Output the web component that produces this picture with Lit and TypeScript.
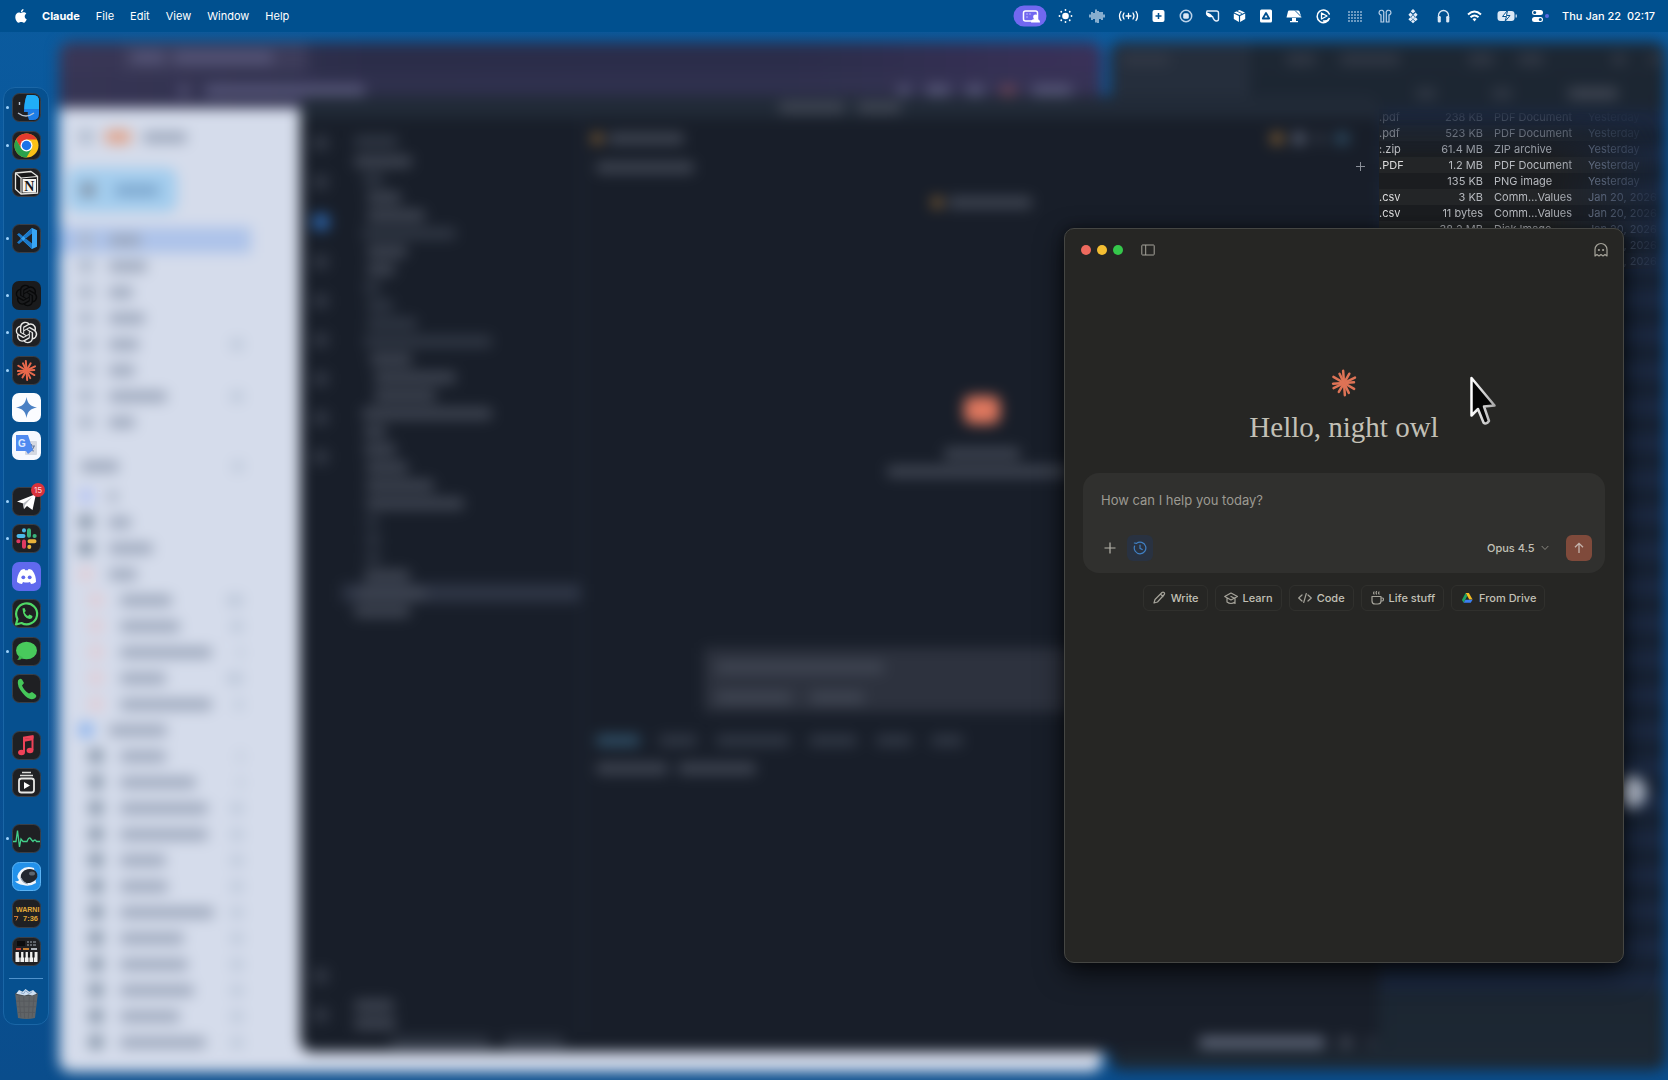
import { LitElement, html, css, svg } from "lit";
import { customElement, property, state } from "lit/decorators.js";
import { classMap } from "lit/directives/class-map.js";

type Bar = { w: number; tone?: string };

const bar = (w: number, tone = "") =>
  html`<span class="bar ${tone}" style="width:${w}px"></span>`;

const bars = (items: Bar[]) => items.map((b) => bar(b.w, b.tone));

/* ---------- menu bar ---------- */

const menus = ["File", "Edit", "View", "Window", "Help"];

const ticks = [0, 45, 90, 135, 180, 225, 270, 315];

const extras = [
  {
    label: "Screen sharing",
    w: 39,
    art: svg`<rect x="-17" y="-10.500" width="33" height="21" rx="10.500" fill="#7168f0"/>
      <rect x="-7" y="-5" width="14" height="10" rx="2" fill="none" stroke="#fff" stroke-width="1.5"/>
      <circle cx="5" cy="1" r="2.4" fill="#fff"/><path d="M0.5 6.5c0-3 2-3.500 4.500-3.500s4.500.5 4.500 3.500z" fill="#fff"/>
      <path d="M-4-2h1M-1-2h1M-4 1h1" stroke="#fff"/>`,
  },
  {
    label: "Brightness",
    w: 31,
    art: svg`<circle r="3.300" fill="#fff"/>${ticks.map(
      (a) => svg`<circle cx="0" cy="-6" r="0.9" fill="#fff" transform="rotate(${a})"/>`
    )}`,
  },
  {
    label: "Voice",
    w: 32,
    art: svg`<path d="M-7-1.500v3M-5-4v8M-3-3v6M-1-6.500v13M1-5v12M3-4v7M5-4v8M7-1.500v3" stroke="#cfe0f2" stroke-width="1.300"/>`,
  },
  {
    label: "Broadcast",
    w: 31,
    art: svg`<path d="M0-2.500v5M-2.500 0h5M-4.500-3q-2 3 0 6M4.500-3q2 3 0 6M-7.500-4.500q-3 4.500 0 9M7.500-4.500q3 4.500 0 9" fill="none" stroke="#fff" stroke-width="1.300" stroke-linecap="round"/>`,
  },
  {
    label: "Add",
    w: 29,
    art: svg`<rect x="-6" y="-6" width="12" height="12" rx="2" fill="#fff"/><path d="M0-3v6M-3 0h6" stroke="#00508f" stroke-width="1.500"/>`,
  },
  {
    label: "Record",
    w: 26,
    art: svg`<circle r="5.700" fill="none" stroke="#bcd3ea" stroke-width="1.500"/><rect x="-2.800" y="-2.800" width="5.600" height="5.600" rx="1.500" fill="#dbe8f5"/>`,
  },
  {
    label: "Tag",
    w: 27,
    art: svg`<path d="M-5.500-5h9.500q2 0 2 2v6q0 2-2 2-2.500 0-4-4.500h-3q-4-1.500-2.500-5.500z" fill="none" stroke="#e4eefa" stroke-width="1.400" stroke-linejoin="round"/><path d="M-6-3.500q5 .5 6 4.500h-3q-3.500-1-3-4.500z" fill="#fff"/>`,
  },
  {
    label: "Package",
    w: 27,
    art: svg`<path d="M0-6l5.500 2.500L0-1-5.500-3.500zM-5.700-2.500L-.6 0v6l-5.100-3zM5.700-2.500L.6 0v6l5.100-3z" fill="#fff"/><path d="M-3-5l5.500 2.600" stroke="#00508f" stroke-width=".8"/>`,
  },
  {
    label: "Drive",
    w: 26,
    art: svg`<rect x="-6" y="-6.500" width="12" height="13" rx="1.500" fill="#fff"/><path d="M0-3l3.200 5.500h-6.400z" fill="none" stroke="#00508f" stroke-width="1.800" stroke-linejoin="round"/>`,
  },
  {
    label: "Display",
    w: 30,
    art: svg`<path d="M-5-5.500H4q1 0 1.500 1L7.500 1.500h-15L-6-4.500q.3-1 1-1z" fill="#fff"/><path d="M-2 2h4v3h-4zM-4 5h8v1.300h-8z" fill="#fff"/><path d="M1-5.500l6 6" stroke="#00508f" stroke-width=".9"/>`,
  },
  {
    label: "Grammar",
    w: 29,
    art: svg`<path d="M5.800-2A6.300 6.300 0 1 0 6 2Q4 5.500 0 5" fill="none" stroke="#fff" stroke-width="1.500" stroke-linecap="round"/><path d="M-2-3L3.500 0-2 3z" fill="none" stroke="#fff" stroke-width="1.300" stroke-linejoin="round"/>`,
  },
  {
    label: "Grid",
    w: 34,
    art: svg`${[-4, -1, 2, 5].map((y) =>
      [-6, -3, 0, 3, 6].map((x) => svg`<rect x=${x - 0.7} y=${y - 0.7} width="1.400" height="1.400" fill="#dbe8f5"/>`)
    )}`,
  },
  {
    label: "Earbuds",
    w: 26,
    art: svg`<path d="M-1.300 6V-2.500a2.400 2.400 0 1 0-2.700 1.500V6zM1.300 6V-2.500a2.400 2.400 0 1 1 2.700 1.500V6z" fill="none" stroke="#b9d0e8" stroke-width="1.200"/>`,
  },
  {
    label: "Sync",
    w: 30,
    art: svg`<path d="M0-7l2.300 2.300L0-2.400l-2.300-2.300zM-2.600-3.600l2.300 2.300-2.300 2.300-2-2.300zM2.600-3.600l2 2.300-2 2.300L.3-1.300zM-2.600 1.200l2.300 2.100-2.300 2-2-2zM2.600 1.200l2 2.100-2 2-2.300-2zM0-.8l2 2L0 3.200l-2-2zM0 3.800l2 1.700L0 7.200l-2-1.700z" fill="#e4eefa"/>`,
  },
  {
    label: "Headphones",
    w: 31,
    art: svg`<path d="M-5 4.500V-.5a5 5 0 0 1 10 0v5" fill="none" stroke="#dbe8f5" stroke-width="1.300"/><rect x="-5.700" y="0" width="3" height="6.500" rx="1.300" fill="#dbe8f5"/><rect x="2.700" y="0" width="3" height="6.500" rx="1.300" fill="#dbe8f5"/>`,
  },
  {
    label: "Wi-Fi",
    w: 31,
    art: svg`<path d="M-6.500-1.500q6.500-6 13 0M-4 1.300q4-3.800 8 0" fill="none" stroke="#fff" stroke-width="1.900"/><path d="M0 5.500L-2 3q2-1.600 4 0z" fill="#fff"/>`,
  },
  {
    label: "Battery",
    w: 33,
    art: svg`<rect x="-9" y="-5" width="17" height="10" rx="3" fill="#dbe8f5"/><rect x="9" y="-1.500" width="1.500" height="3" fill="#a9c4e0"/><path d="M1-5.500l-5 6h4l-1.500 5 5-6H0z" fill="#fff" stroke="#00508f" stroke-width="1"/>`,
  },
  {
    label: "Control Center",
    w: 32,
    art: svg`<rect x="-7" y="-6" width="11" height="5" rx="2.500" fill="#fff"/><circle cx="-4.300" cy="-3.500" r="1.500" fill="#00508f"/><rect x="-7" y="1" width="11" height="5" rx="2.500" fill="#fff"/><circle cx="1.300" cy="3.500" r="1.500" fill="#00508f"/><circle cx="8" cy="0" r="2" fill="#5a6be0"/>`,
  },
];

@customElement("menu-bar")
export class MenuBar extends LitElement {
  static styles = css`
    :host {
      display: flex;
      align-items: center;
      height: 32px;
      padding: 0 13px 0 11px;
      box-sizing: border-box;
      background: #00508f;
      color: #fff;
      font: 11px Inter, "Liberation Sans", sans-serif;
    }
    button {
      display: flex;
      align-items: center;
      border: 0;
      padding: 0;
      background: none;
      color: inherit;
      font: inherit;
    }
    .apple {
      padding: 0 4px;
      margin-right: 11px;
    }
    nav {
      display: flex;
      gap: 16px;
      flex: 1;
    }
    .app {
      font-weight: 700;
    }
    .clock {
      font-weight: 500;
      margin-left: 7px;
      white-space: pre;
    }
  `;

  render() {
    return html`
      <button class="apple" aria-label="Apple menu">
        <svg width="12" height="14" viewBox="0 0 12 14">
          <path
            fill="#fff"
            d="M8.500 0C8.600 1.800 7.300 3.100 5.900 3.200 5.700 1.600 7.100.2 8.500 0zM6 4c.6 0 1.400-.7 2.700-.7 1 0 2 .5 2.600 1.400-2.300 1.400-1.900 4.500.4 5.500-.6 1.600-1.600 3.500-2.900 3.500-1 0-1.300-.6-2.600-.6-1.200 0-1.600.6-2.600.6C2 13.700.3 10.700.3 8c0-3 1.900-4.600 3.600-4.600C4.900 3.400 5.600 4 6 4z"
          />
        </svg>
      </button>
      <nav>
        <button class="app">Claude</button>
        ${menus.map((m) => html`<button>${m}</button>`)}
      </nav>
      ${extras.map(
        (e) => html`
          <button aria-label=${e.label}>
            <svg width=${e.w} height="22" viewBox="${-e.w / 2} -11 ${e.w} 22">${e.art}</svg>
          </button>
        `
      )}
      <time class="clock">Thu Jan 22  02:17</time>
    `;
  }
}

/* ---------- dock ---------- */

const rays = (color: string, r: number, width: number) => {
  const lengths = [1, 0.88, 1, 0.82, 0.96, 0.9, 1, 0.85, 0.95, 0.9, 1, 0.84];
  return svg`<g stroke=${color} stroke-width=${width} stroke-linecap="round">${lengths.map(
    (l, i) => svg`<path d="M0 0V${-r * l}" transform="rotate(${i * 30 + (i % 3) * 4 - 4})"/>`
  )}</g>`;
};

const knot = (color: string) =>
  svg`<path transform="translate(3.700 3.700) scale(.9)" fill=${color} d="M22.2819 9.8211a5.9847 5.9847 0 0 0-.5157-4.9108 6.0462 6.0462 0 0 0-6.5098-2.9A6.0651 6.0651 0 0 0 4.9807 4.1818a5.9847 5.9847 0 0 0-3.9977 2.9 6.0462 6.0462 0 0 0 .7427 7.0966 5.98 5.98 0 0 0 .511 4.9107 6.051 6.051 0 0 0 6.5146 2.9001A5.9847 5.9847 0 0 0 13.2599 24a6.0557 6.0557 0 0 0 5.7718-4.2058 5.9894 5.9894 0 0 0 3.9977-2.9001 6.0557 6.0557 0 0 0-.7475-7.0729zm-9.022 12.6081a4.4755 4.4755 0 0 1-2.8764-1.0408l.1419-.0804 4.7783-2.7582a.7948.7948 0 0 0 .3927-.6813v-6.7369l2.02 1.1686a.071.071 0 0 1 .038.052v5.5826a4.504 4.504 0 0 1-4.4945 4.4944zm-9.6607-4.1254a4.4708 4.4708 0 0 1-.5346-3.0137l.142.0852 4.783 2.7582a.7712.7712 0 0 0 .7806 0l5.8428-3.3685v2.3324a.0804.0804 0 0 1-.0332.0615L9.74 19.9502a4.4992 4.4992 0 0 1-6.1408-1.6464zM2.3408 7.8956a4.485 4.485 0 0 1 2.3655-1.9728V11.6a.7664.7664 0 0 0 .3879.6765l5.8144 3.3543-2.0201 1.1685a.0757.0757 0 0 1-.071 0l-4.8303-2.7865A4.504 4.504 0 0 1 2.3408 7.8956zm16.5963 3.8558L13.1038 8.364 15.1192 7.2a.0757.0757 0 0 1 .071 0l4.8303 2.7913a4.4944 4.4944 0 0 1-.6765 8.1042v-5.6772a.79.79 0 0 0-.407-.667zm2.0107-3.0231l-.142-.0852-4.7735-2.7818a.7759.7759 0 0 0-.7854 0L9.409 9.2297V6.8974a.0662.0662 0 0 1 .0284-.0615l4.8303-2.7866a4.4992 4.4992 0 0 1 6.6802 4.66zM8.3065 12.863l-2.02-1.1638a.0804.0804 0 0 1-.038-.0567V6.0742a4.4992 4.4992 0 0 1 7.3757-3.4537l-.142.0805L8.704 5.459a.7948.7948 0 0 0-.3927.6813zm1.0976-2.3654l2.602-1.4998 2.6069 1.4998v2.9994l-2.5974 1.4997-2.6067-1.4997Z"/>`;

const dark = svg`<rect x=".5" y=".5" width="28" height="28" rx="7" fill="#1f2023" stroke="#3a3f47"/>`;

const dockGroups = [
  [
    {
      label: "Finder",
      open: true,
      art: svg`${dark}<path d="M15 2h6q6 0 6 6v13q0 6-6 6h-4c-1-3-1.500-5-1.200-8H12c0-7 1-13 3-17z" fill="#1d7de6"/><path d="M15 2h6q6 0 6 6v8H12.300c.2-6 1.200-11 2.700-14z" fill="#20aef8"/><path d="M6 20q8 6 16 0" fill="none" stroke="#b9c4d2" stroke-width="1.300"/><path d="M7.500 9v3" stroke="#b9c4d2" stroke-width="1.400"/>`,
    },
    {
      label: "Chrome",
      open: true,
      art: svg`${dark}<circle cx="14.500" cy="14.500" r="12" fill="#fbc116"/><path d="M4.100 8.500a12 12 0 0 1 20.800 0H14.500L9.300 17.500z" fill="#e33b2e"/><path d="M4.100 8.500a12 12 0 0 0 10.400 18l5.200-9-10.400 0z" fill="#2ba24c"/><circle cx="14.500" cy="14.500" r="6" fill="#fff"/><circle cx="14.500" cy="14.500" r="4.700" fill="#1a73e8"/>`,
    },
    {
      label: "Notion",
      art: svg`${dark}<path d="M3.500 5L19 3.500l6.500 4.700V25l-16.500 1-5.500-5z" fill="#17181a" stroke="#e4e4e0" stroke-width="1.300" stroke-linejoin="round"/><path d="M4 5.500l5 4.500M9 10l16.500-1.500M9 10v16" stroke="#e4e4e0" stroke-width="1.200"/><rect x="10.500" y="11" width="13.500" height="13.500" fill="#f5f5f2"/><text x="17.300" y="22.500" text-anchor="middle" font-family="Liberation Serif, serif" font-weight="700" font-size="14" fill="#17181a">N</text>`,
    },
  ],
  [
    {
      label: "Code",
      open: true,
      art: svg`${dark}<path d="M20 4l5 2.300v16.400L20 25 8.500 14.500z" fill="#38a6f5"/><path d="M20 9v11l-7-5.500z" fill="#1f2023"/><path d="M5 10.500L7 9l13 10.500V25zM5 18.500L7 20 20 9.500V4z" fill="#1b78c8"/>`,
    },
  ],
  [
    { label: "ChatGPT Atlas", open: true, art: svg`<rect width="29" height="29" rx="7" fill="#1a1b1d"/>${knot("#08090a")}` },
    { label: "ChatGPT", open: true, art: svg`${dark}${knot("#e8e8e6")}` },
    { label: "Claude", open: true, art: svg`${dark}<g transform="translate(14.500 14.500)">${rays("#e8694c", 9.5, 2)}</g>` },
    {
      label: "Gemini",
      art: svg`<rect width="29" height="29" rx="7" fill="#fbfcff"/><path d="M14.500 4c1 6.500 4 9.500 10.500 10.500C18.500 15.500 15.500 18.500 14.500 25 13.500 18.500 10.500 15.500 4 14.500 10.500 13.500 13.500 10.500 14.500 4z" fill="#4a80c4"/>`,
    },
    {
      label: "Translate",
      art: svg`<rect width="29" height="29" rx="7" fill="#f6f9ff"/><rect x="13" y="10" width="12" height="14" rx="1" fill="#d5d9e2"/><path d="M16 15h7M19.500 13v2M17 20q4-1 5-5M17 16q2 4 5 4" fill="none" stroke="#6a7fa5" stroke-width="1.100"/><path d="M4 4h12l5 15-5 4-2-3H4z" fill="#4f8af0"/><text x="10" y="15.500" text-anchor="middle" font-family="Liberation Sans, sans-serif" font-weight="700" font-size="10" fill="#dfeaff">G</text>`,
    },
  ],
  [
    {
      label: "Telegram",
      open: true,
      badge: "15",
      art: svg`${dark}<path d="M5 14.500L24 7l-3.500 16-5.500-4-3 3-.8-5.500z" fill="#fff"/><path d="M11 16.500L20 10l-7 8-1 4z" fill="#b9bcc2"/>`,
    },
    {
      label: "Slack",
      open: true,
      art: svg`${dark}<g stroke-width="4" stroke-linecap="round"><path d="M6.500 12h5M12 6.200v.2" stroke="#4cb9e8"/><path d="M17 6.200v5.500M22.500 12h.2" stroke="#39b37c"/><path d="M17.500 17.300h5M17.300 22.700v.2" stroke="#e7b23a"/><path d="M12 17.500v5.200M6.300 17.300h.2" stroke="#df3a62"/></g>`,
    },
    {
      label: "Discord",
      art: svg`<rect width="29" height="29" rx="7" fill="#6069ee"/><path d="M9 8q2-1 3.500-1l.6 1.200h2.800L16.500 7Q18 7 20 8q4 5 4 12-2.500 2-5 2l-1-2q-3.500 1-7 0l-1 2q-2.500 0-5-2Q5 13 9 8z" fill="#fff"/><circle cx="11.300" cy="15.300" r="1.900" fill="#6069ee"/><circle cx="17.700" cy="15.300" r="1.900" fill="#6069ee"/>`,
    },
    {
      label: "WhatsApp",
      art: svg`${dark}<path d="M4 25.500l1.500-5.500A10.500 10.500 0 1 1 9.500 24z" fill="none" stroke="#4fd866" stroke-width="2.200" stroke-linejoin="round"/><path d="M10.500 9.500l2-.5 1.300 3-1.300 1.500q1.200 2.300 3.500 3.500l1.500-1.500 3 1.500q0 3-3 3Q11 19 10.500 9.500z" fill="#4fd866"/>`,
    },
    {
      label: "Messages",
      open: true,
      art: svg`${dark}<ellipse cx="14.500" cy="13.500" rx="10.500" ry="8.700" fill="#48c95c"/><path d="M7 18q0 4-2 5 4 0 6-2.500z" fill="#3dbb51"/>`,
    },
    {
      label: "Phone",
      art: svg`${dark}<path d="M6 6.500q2-3 4-1l2 3.500-2 2.500q2 5 7 8l3-1.500 3.500 2.500q2 2-1 4Q17 27 11 19.500 4.500 12 6 6.500z" fill="#45c75a"/>`,
    },
  ],
  [
    {
      label: "Music",
      art: svg`${dark}<path d="M11 8V5.800L21.500 4v3.500z" fill="#ee4258"/><path d="M12 6v15M20.500 5v14" stroke="#ee4258" stroke-width="2"/><path d="M12 9.500L20.500 8" stroke="#ee4258" stroke-width="2.400"/><ellipse cx="9.500" cy="21.500" rx="3.400" ry="2.700" fill="#ee4258"/><ellipse cx="18" cy="19.500" rx="3.400" ry="2.700" fill="#ee4258"/>`,
    },
    {
      label: "Player",
      art: svg`${dark}<path d="M10 4.500h9M8 7.500h13" stroke="#dcdcda" stroke-width="1.700"/><rect x="7" y="10.500" width="15" height="14" rx="2.500" fill="none" stroke="#e8e8e6" stroke-width="1.800"/><path d="M12 14l6 3.500-6 3.500z" fill="#fff"/>`,
    },
  ],
  [
    {
      label: "Activity Monitor",
      open: true,
      art: svg`${dark}<path d="M1 17.500h3l1.500-11L7.500 23 9 15l2 2.500h4q2-5 3.500-3T21 17.500q2-3 3.500 0H28" fill="none" stroke="#43d08b" stroke-width="1.300"/>`,
    },
    {
      label: "Proxy",
      art: svg`<rect x=".5" y=".5" width="28" height="28" rx="7" fill="#2291ea" stroke="#5cb4f5"/><path d="M9 8q5-5 13-2l2 15q-6 4-13 2-6-1-8-4 3 1 4-1-4-4 2-10z" fill="#f1f5fa"/><ellipse cx="17" cy="14" rx="8.500" ry="7" fill="#22272f" transform="rotate(-14 17 14)"/><ellipse cx="20" cy="11.500" rx="3" ry="2" fill="#5d6670"/><path d="M9 16q2 5 7 6" fill="none" stroke="#9aa6b5" stroke-width="1.200"/>`,
    },
    {
      label: "Console",
      art: svg`${dark}<text x="4" y="12.500" font-family="Liberation Sans, sans-serif" font-weight="700" font-size="7" fill="#e0a93a">WARNI</text><text x="11" y="22" font-family="Liberation Sans, sans-serif" font-weight="700" font-size="7.500" fill="#e0a93a">7:36</text><path d="M2 17.500h4l-2 4" stroke="#d07a36" fill="none"/>`,
    },
    {
      label: "MIDI Keys",
      art: svg`${dark}<rect x="5" y="4" width="8" height="5" fill="#0c0c0e"/><path d="M15 5h2M18 5h2M21 5h3M15 8h2M18 8h2M21 8h3" stroke="#777b83" stroke-width="1.400"/><path d="M4 12h5" stroke="#d3483c" stroke-width="1.800"/><path d="M11 12h6" stroke="#d88a35" stroke-width="1.800"/><path d="M19 12h6" stroke="#bfc4cb" stroke-width="1.800"/><rect x="3.500" y="15" width="22" height="10" fill="#f1f1ef"/><path d="M8 15v10M12.500 15v10M17 15v10M21.500 15v10" stroke="#222" stroke-width=".8"/><path d="M8 15v5.500M12.500 15v5.500M17 15v5.500M21.500 15v5.500" stroke="#17181a" stroke-width="2.200"/>`,
    },
  ],
];

@customElement("app-dock")
export class AppDock extends LitElement {
  static styles = css`
    :host {
      display: flex;
      flex-direction: column;
      width: 46px;
      box-sizing: border-box;
      padding-top: 1px;
      border: 1px solid #1a66a6;
      border-radius: 12px;
      background: #06508f;
    }
    .slot {
      flex: 2 0 0;
      display: flex;
      align-items: center;
      padding-left: 2px;
      gap: 3px;
    }
    .spacer {
      flex: 1 0 0;
    }
    .dot {
      width: 3px;
      height: 3px;
      border-radius: 50%;
    }
    .open {
      background: #9fd2fb;
    }
    button {
      display: flex;
      position: relative;
      border: 0;
      padding: 0;
      background: none;
    }
    .badge {
      position: absolute;
      top: -4px;
      right: -4px;
      width: 14px;
      height: 14px;
      border-radius: 50%;
      background: #d8323c;
      color: #ffd9d9;
      font: 8px/14px Inter, "Liberation Sans", sans-serif;
      text-align: center;
    }
    hr {
      width: 34px;
      margin: 8px 0 9px 5px;
      border: 0;
      border-top: 1px solid #4f92cc;
    }
    .trash {
      padding: 0 0 4px 9px;
    }
  `;

  render() {
    return html`
      ${dockGroups.map(
        (group, i) => html`
          ${i ? html`<span class="spacer"></span>` : ""}
          ${group.map(
            (app: any) => html`
              <div class="slot">
                <span class=${classMap({ dot: true, open: !!app.open })}></span>
                <button aria-label=${app.label}>
                  <svg width="29" height="29" viewBox="0 0 29 29">${app.art}</svg>
                  ${app.badge ? html`<span class="badge">${app.badge}</span>` : ""}
                </button>
              </div>
            `
          )}
        `
      )}
      <hr />
      <button class="trash" aria-label="Trash">
        <svg width="27" height="32" viewBox="0 0 26 34">
          <path d="M1 6h24l-3 26q-9 2-18 0z" fill="#606467" />
          <path d="M5 9l2 22M10 9l1 23M16 9l-1 23M21 9l-2 22M2 14h22M3 20h20M4 26h18" stroke="#565a5e" />
          <ellipse cx="13" cy="6" rx="12" ry="2.500" fill="#484c50" />
          <path d="M2 6l3-4 4 2 3-3 4 3 4-2 4 4-5 2-4-1-4 1z" fill="#cfe0f2" />
          <path d="M7 5l3 1 2-3 4 3 3-2" fill="none" stroke="#86a6cc" />
        </svg>
      </button>
    `;
  }
}

/* ---------- blurred windows behind ---------- */

const mailRows = [32, 38, 24, 36, 30, 26, 58, 26];
const mailCounted = [4, 6];

const labelRows = [
  { w: 8, icon: "lilac" },
  { w: 22, icon: "ink" },
  { w: 44, icon: "ink" },
  { w: 28, icon: "rose" },
  { w: 52, icon: "rose", sub: true, count: 16 },
  { w: 60, icon: "rose", sub: true, count: 12 },
  { w: 92, icon: "rose", sub: true, count: 5 },
  { w: 46, icon: "rose", sub: true, count: 16 },
  { w: 92, icon: "rose", sub: true, count: 8 },
  { w: 58, icon: "azure" },
  ...[46, 76, 88, 88, 46, 48, 94, 64, 68, 74, 60, 86].map((w, i) => ({
    w,
    icon: "ink",
    sub: true,
    count: i < 2 ? 5 : 12,
  })),
];

const treeRows = [
  [0, 58], [9, 20], [13, 34], [13, 58], [8, 94], [13, 40], [13, 28], [10, 16],
  [13, 26], [13, 50], [10, 128], [16, 42], [20, 82], [20, 62], [8, 130], [10, 22],
  [10, 32], [12, 42], [12, 68], [12, 98], [12, 12], [12, 14], [12, 14], [10, 46],
  [2, 70], [0, 56],
];

const faintRows = [1, 4, 7, 8, 9, 10, 20, 21, 22];

const panelTabs: Bar[] = [
  { w: 44, tone: "sky" },
  { w: 38, tone: "dim" },
  { w: 74, tone: "dim" },
  { w: 48, tone: "dim" },
  { w: 36, tone: "dim" },
  { w: 32, tone: "dim" },
];

@customElement("background-windows")
export class BackgroundWindows extends LitElement {
  static styles = css`
    :host {
      display: block;
      filter: blur(7px);
    }
    .window {
      position: absolute;
      overflow: hidden;
      border-radius: 12px;
    }
    .row {
      display: flex;
      align-items: center;
    }
    .bar {
      height: 11px;
      border-radius: 4px;
      background: #414754;
      flex: none;
    }
    .dim { background: #323946; }
    .sky { background: #305068; }
    .amber { background: #8a6433; }
    .pale { background: #626a7c; }
    .violet { background: #57577a; }
    .plum { background: #6b4356; }

    .browser {
      inset: 10px 566px 8px 59px;
      background: #d5dceb;
    }
    .browser-top {
      height: 66px;
      background: linear-gradient(90deg, #3a3757, #2b2d49 30%, #2b2d4a 70%, #3a3159);
    }
    .browser-tabs {
      height: 30px;
      padding-left: 62px;
    }
    .tab {
      gap: 8px;
      height: 30px;
      width: 176px;
      padding-left: 10px;
      background: #3d3c5a;
    }
    .address {
      height: 36px;
      padding: 0 30px 0 120px;
      gap: 16px;
      background: #34345280;
    }
    .address .first { margin-left: auto; }
    .mail {
      width: 192px;
    }
    .mail .bar {
      height: 11px;
      background: #9ba6ba;
    }
    .mail-head {
      height: 58px;
      padding-left: 20px;
      gap: 12px;
    }
    .mail .logo { background: #e0a48c; height: 14px; }
    .compose {
      width: 110px;
      height: 44px;
      margin: 2px 0 15px 8px;
      padding-left: 14px;
      box-sizing: border-box;
      gap: 20px;
      border-radius: 10px;
      background: #a3cdee;
    }
    .compose .bar { background: #7aa4cb; }
    .item {
      height: 26px;
      padding: 0 8px 0 20px;
      gap: 16px;
    }
    .sub { padding-left: 30px; gap: 17px; }
    .chosen { background: #adc3ea; }
    .icon {
      width: 14px;
      height: 14px;
      border-radius: 4px;
      background: #adb8ca;
      flex: none;
    }
    .ink { background: #8090a3; }
    .rose { background: #e2ccd4; }
    .lilac { background: #b4c3f3; }
    .azure { background: #86b0ee; }
    .mail .count {
      margin-left: auto;
      background: #b8c4d6;
    }
    .label-head {
      height: 26px;
      margin: 18px 0 4px;
      padding: 0 8px 0 22px;
    }

    .finder {
      inset: 10px 2px 10px 1110px;
      background: linear-gradient(#1d2733, #171f2c 30%, #182230 80%, #1d2833);
    }
    .finder-top { height: 68px; align-items: flex-start; }
    .finder-tab {
      width: 140px;
      height: 58px;
      padding: 12px 0 0 12px;
      box-sizing: border-box;
      align-items: flex-start;
      margin-right: 36px;
      background: #252e3c;
    }
    .finder-tools { flex: 1; }
    .finder-tools .row { height: 34px; gap: 24px; }
    .finder-tools .columns { padding-left: 130px; gap: 56px; }
    .gap { width: 20px; }
    .stripes {
      height: 880px;
      background: repeating-linear-gradient(#1b2840 0 18px, #162132 18px 36px);
      margin-left: 270px;
    }
    .knob {
      position: absolute;
      right: 20px;
      top: 734px;
      width: 30px;
      height: 32px;
      border-radius: 50%;
      background: #b4bdcd;
    }

    .editor {
      display: flex;
      flex-direction: column;
      inset: 64px 289px 28px 300px;
      background: #181e29;
    }
    .editor-top {
      height: 22px;
      justify-content: center;
      gap: 12px;
      background: #212a37;
    }
    .editor-body { display: flex; flex: 1; }
    .activity {
      display: flex;
      flex-direction: column;
      align-items: center;
      width: 42px;
      padding-top: 18px;
      gap: 25px;
    }
    .activity .icon { width: 14px; height: 14px; background: #343a47; }
    .activity .on { background: #2c63a8; width: 16px; height: 16px; }
    .activity .low { margin-top: auto; }
    .activity .last { margin-bottom: 10px; }
    .tree {
      display: flex;
      flex-direction: column;
      width: 238px;
      padding-top: 12px;
      border-right: 4px solid #1c2330;
    }
    .tree-head { height: 22px; padding-left: 12px; }
    .tree .row { flex: none; }
    .leaf { height: 18px; }
    .picked { background: #2e3545; }
    .tree-foot { margin-top: auto; padding-left: 12px; height: 18px; }
    .foot-last { margin-top: 0; }
    .main { flex: 1; display: flex; flex-direction: column; }
    .file-tab { height: 28px; margin-top: 6px; padding-left: 8px; gap: 6px; }
    .file-actions { margin-left: auto; gap: 10px; padding-right: 30px; display: flex; }
    .crumbs { height: 30px; padding-left: 12px; }
    .center { justify-content: center; gap: 6px; }
    .chat-title { height: 40px; }
    .mascot {
      align-self: center;
      width: 36px;
      height: 28px;
      margin: 174px 0 20px;
      border-radius: 8px;
      background: #de775e;
    }
    .hint { height: 18px; }
    .prompt {
      align-self: center;
      width: 556px;
      height: 64px;
      box-sizing: border-box;
      margin-top: 168px;
      padding: 14px 12px;
      background: #2d323e;
    }
    .prompt .row { height: 10px; margin-bottom: 20px; gap: 18px; }
    .panel-tabs { height: 28px; margin-top: 14px; padding-left: 12px; gap: 19px; }
    .terminal { height: 28px; padding-left: 12px; gap: 10px; }
    .status { height: 20px; padding: 0 4px 0 90px; gap: 14px; }
    .status .push { margin-left: auto; }
  `;

  render() {
    return html`
      <div class="window browser">
        <div class="browser-top">
          <div class="row browser-tabs">
            <div class="row tab">${bars([{ w: 34, tone: "violet" }, { w: 100, tone: "violet" }])}</div>
          </div>
          <div class="row address">
            ${bars([{ w: 10, tone: "violet" }, { w: 160, tone: "violet" }])}
            ${bars([{ w: 12, tone: "violet first" }, { w: 24, tone: "violet" }, { w: 18, tone: "violet" }, { w: 16, tone: "plum" }, { w: 40, tone: "violet" }])}
          </div>
        </div>
        <div class="mail">
          <div class="row mail-head"><span class="icon"></span>${bar(26, "logo")}${bar(44)}</div>
          <div class="row compose"><span class="icon ink"></span>${bar(44)}</div>
          ${mailRows.map(
            (w, i) => html`
              <div class=${classMap({ row: true, item: true, chosen: i === 0 })}>
                <span class="icon"></span>${bar(w)}${mailCounted.includes(i) ? bar(12, "count") : ""}
              </div>
            `
          )}
          <div class="row label-head">${bar(38)}${bar(10, "count")}</div>
          ${labelRows.map(
            (r: any) => html`
              <div class=${classMap({ row: true, item: true, sub: !!r.sub })}>
                <span class="icon ${r.icon}"></span>${bar(r.w)}${r.count ? bar(r.count, "count") : ""}
              </div>
            `
          )}
        </div>
      </div>

      <div class="window finder">
        <div class="row finder-top">
          <div class="row finder-tab">${bar(48, "dim")}</div>
          <div class="finder-tools">
            <div class="row">
              ${bars([30, 60].map((w) => ({ w, tone: "dim" })))}<span class="gap"></span>
              ${bars([26, 26].map((w) => ({ w, tone: "dim" })))}<span class="gap"></span>
              ${bars([14, 12].map((w) => ({ w, tone: "dim" })))}
            </div>
            <div class="row columns">${bars([{ w: 20, tone: "dim" }, { w: 20, tone: "dim" }, { w: 50 }])}</div>
          </div>
        </div>
        <div class="stripes"></div>
        <span class="knob"></span>
      </div>

      <div class="window editor">
        <div class="row editor-top">${bars([{ w: 66 }, { w: 44 }])}</div>
        <div class="editor-body">
          <div class="activity">
            ${Array.from({ length: 9 }, (_, i) => html`<span class=${classMap({ icon: true, on: i === 2 })}></span>`)}
            <span class="icon low"></span><span class="icon last"></span>
          </div>
          <div class="tree">
            <div class="row tree-head">${bar(44, "dim")}</div>
            ${treeRows.map(
              ([indent, w], i) => html`
                <div
                  class=${classMap({ row: true, leaf: true, picked: i === 24 })}
                  style="padding-left:${12 + indent}px"
                >
                  ${bar(w, faintRows.includes(i) ? "dim" : "")}
                </div>
              `
            )}
            <div class="row tree-foot">${bar(40)}</div>
            <div class="row tree-foot foot-last">${bar(42)}</div>
          </div>
          <div class="main">
            <div class="row file-tab">
              ${bars([{ w: 10, tone: "amber" }, { w: 76 }])}
              <span class="file-actions">
                ${bars([{ w: 12, tone: "amber" }, { w: 12, tone: "pale" }, { w: 10, tone: "dim" }, { w: 14, tone: "sky" }])}
              </span>
            </div>
            <div class="row crumbs">${bar(98)}</div>
            <div class="row center chat-title">${bars([{ w: 10, tone: "amber" }, { w: 84 }])}</div>
            <span class="mascot"></span>
            <div class="row center hint">${bar(76)}</div>
            <div class="row center hint">${bar(190)}</div>
            <div class="prompt">
              <div class="row">${bar(168)}</div>
              <div class="row">${bars([{ w: 76 }, { w: 54 }])}</div>
            </div>
            <div class="row panel-tabs">${bars(panelTabs)}</div>
            <div class="row terminal">${bars([{ w: 72 }, { w: 78 }])}</div>
          </div>
        </div>
        <div class="row status">
          ${bars([{ w: 100, tone: "dim" }, { w: 60, tone: "dim" }])}
          ${bar(126, "pale push")}${bars([{ w: 14 }, { w: 8, tone: "dim" }])}
        </div>
      </div>
    `;
  }
}

/* ---------- sharp part of the file list ---------- */

const files = [
  { name: ".pdf", size: "238 KB", kind: "PDF Document", date: "Yesterday" },
  { name: ".pdf", size: "523 KB", kind: "PDF Document", date: "Yesterday" },
  { name: ":.zip", size: "61.4 MB", kind: "ZIP archive", date: "Yesterday" },
  { name: ".PDF", size: "1.2 MB", kind: "PDF Document", date: "Yesterday" },
  { name: "", size: "135 KB", kind: "PNG image", date: "Yesterday" },
  { name: ".csv", size: "3 KB", kind: "Comm…Values", date: "Jan 20, 2026" },
  { name: ".csv", size: "11 bytes", kind: "Comm…Values", date: "Jan 20, 2026" },
  { name: "", size: "38.2 MB", kind: "Disk Image", date: "Jan 20, 2026" },
  { name: "", size: "", kind: "", date: "Jan 20, 2026" },
  { name: "", size: "", kind: "", date: "Jan 20, 2026" },
];

@customElement("file-list")
export class FileList extends LitElement {
  static styles = css`
    :host {
      display: block;
      mask-image: linear-gradient(transparent, #000 50px), linear-gradient(90deg, #000 170px, rgb(0 0 0 / 55%) 225px, transparent 282px);
      mask-composite: intersect;
    }
    table {
      width: 100%;
      border-collapse: collapse;
      table-layout: fixed;
      background: #1b1d20;
      color: #b6b9be;
      font: 11px/16px Inter, "Liberation Sans", sans-serif;
    }
    td {
      height: 16px;
      padding: 0;
      white-space: nowrap;
    }
    tr:nth-child(even) {
      background: #232527;
    }
    .name {
      width: 24px;
      color: #dcdcdc;
    }
    .size {
      width: 80px;
      text-align: right;
    }
    .kind {
      width: 94px;
      padding-left: 11px;
    }
    .date {
      color: #8590a4;
    }
  `;

  render() {
    return html`
      <table aria-label="Files">
        <tbody>
          ${files.map(
            (f) => html`
              <tr>
                <td class="name">${f.name}</td>
                <td class="size">${f.size}</td>
                <td class="kind">${f.kind}</td>
                <td class="date">${f.date}</td>
              </tr>
            `
          )}
        </tbody>
      </table>
    `;
  }
}

/* ---------- Claude window ---------- */

const line = (d: string) =>
  svg`<path d=${d} fill="none" stroke="#a5a39a" stroke-width="1.200" stroke-linecap="round" stroke-linejoin="round"/>`;

const suggestions = [
  { label: "Write", art: line("M2 12l1-3.500L10 1.500q1-.8 2 0t.3 2L5.500 11zM8.500 3l2.500 2.500") },
  { label: "Learn", art: line("M.7 5.500L7 2l6.500 3.500L7 9zM3 7v4q4 3 8 0V7M7 5.500l4 2v5") },
  { label: "Code", art: line("M4 4L.7 7 4 10M10 4l3.300 3L10 10M8.300 2.500l-2.600 9") },
  { label: "Life stuff", art: line("M2 5.500h9V10q0 3-3 3H5q-3 0-3-3zM11 7h1.500q1 0 1 1.500T12 10h-1M4 1q-.8 1 0 2M6.500.5q-.8 1.200 0 2.500M9 1q-.8 1 0 2") },
  {
    label: "From Drive",
    art: svg`<g transform="translate(1.500 2) scale(.82)"><path d="M5 0h4l4.500 8h-4z" fill="#f5bc20"/><path d="M5 0L.5 8.500 2.700 12 7 3.800z" fill="#20a464"/><path d="M4.800 8.200h8.700L11.300 12H2.700z" fill="#3b7ff0"/></g>`,
  },
];

@customElement("claude-window")
export class ClaudeWindow extends LitElement {
  static styles = css`
    :host {
      display: flex;
      flex-direction: column;
      box-sizing: border-box;
      border: 1px solid #454643;
      border-radius: 10px;
      background: #262624;
      box-shadow: 0 10px 28px rgb(0 0 0 / 65%), 0 0 12px rgb(0 0 0 / 40%);
      color: #c2c0b6;
      font: 500 11px Inter, "Liberation Sans", sans-serif;
    }
    button,
    select,
    textarea {
      border: 0;
      margin: 0;
      padding: 0;
      background: none;
      color: inherit;
      font: inherit;
      outline: 0;
    }
    button {
      display: flex;
      align-items: center;
      justify-content: center;
    }
    header {
      display: flex;
      align-items: center;
      height: 42px;
      padding: 0 14px 0 16px;
      gap: 6px;
    }
    .light {
      width: 10px;
      height: 10px;
      border-radius: 50%;
    }
    .close { background: #ee6a5e; }
    .min { background: #f4be32; }
    .max { background: #35c74b; }
    .sidebar { margin-left: 12px; }
    .ghost { margin-left: auto; }
    main {
      display: flex;
      flex-direction: column;
      align-items: center;
      padding: 98px 18px 0;
    }
    h1 {
      margin: 12px 0 28px;
      font: 29px/36px "Liberation Serif", "Times New Roman", serif;
    }
    form {
      width: 100%;
      box-sizing: border-box;
      padding: 18px 13px 12px 14px;
      border-radius: 16px;
      background: #30302e;
    }
    textarea {
      display: block;
      width: 100%;
      height: 44px;
      box-sizing: border-box;
      padding: 0 4px;
      resize: none;
      font: 13px/18px Inter, "Liberation Sans", sans-serif;
    }
    textarea::placeholder {
      color: #9c9a92;
      opacity: 1;
    }
    .tools {
      display: flex;
      align-items: center;
      gap: 4px;
    }
    .tool {
      width: 26px;
      height: 26px;
      border-radius: 6px;
    }
    .active { background: #293241; }
    .model {
      display: flex;
      align-items: center;
      gap: 6px;
      margin: 0 13px 0 auto;
      line-height: 16px;
    }
    select { appearance: none; }
    .send { background: #7f4a3b; }
    .chips {
      display: flex;
      gap: 7px;
      margin-top: 12px;
    }
    .chip {
      gap: 5px;
      height: 26px;
      padding: 0 8px;
      border: 1px solid #30302d;
      border-radius: 6px;
      white-space: nowrap;
    }
  `;

  @property({ type: String }) model = "Opus 4.5";
  @state() draft = "";

  render() {
    return html`
      <header>
        <button class="light close" aria-label="Close"></button>
        <button class="light min" aria-label="Minimize"></button>
        <button class="light max" aria-label="Zoom"></button>
        <button class="sidebar" aria-label="Toggle sidebar">
          <svg width="14" height="12" viewBox="0 0 14 12">
            <path d="M1.500 1h11q.7 0 .7.700v8.600q0 .7-.7.700h-11q-.7 0-.7-.7V1.700q0-.7.7-.7zM4.700 1v10" fill="none" stroke="#a5a39a" />
          </svg>
        </button>
        <button class="ghost" aria-label="Incognito chat">
          <svg width="16" height="16" viewBox="0 0 16 16">
            <path d="M2 14V7.500a6 6 0 0 1 12 0V14l-2-1.500-2 1.500-2-1.500L6 14l-2-1.500z" fill="none" stroke="#a5a39a" stroke-width="1.200" stroke-linejoin="round" />
            <circle cx="5.900" cy="8" r="1.100" fill="#a5a39a" /><circle cx="10.100" cy="8" r="1.100" fill="#a5a39a" />
          </svg>
        </button>
      </header>
      <main>
        <svg width="28" height="28" viewBox="-14 -14 28 28" aria-hidden="true">${rays("#de7356", 12.2, 2.5)}</svg>
        <h1>Hello, night owl</h1>
        <form @submit=${this.handleSubmit}>
          <textarea
            aria-label="Message"
            placeholder="How can I help you today?"
            .value=${this.draft}
            @input=${this.handleInput}
          ></textarea>
          <div class="tools">
            <button class="tool" type="button" aria-label="Add">
              <svg width="12" height="12" viewBox="0 0 12 12"><path d="M6 .5v11M.5 6h11" stroke="#b5b3aa" stroke-width="1.200" /></svg>
            </button>
            <button class="tool active" type="button" aria-label="Extended thinking">
              <svg width="14" height="14" viewBox="0 0 14 14">
                <path d="M3.500 2.400A5.800 5.800 0 1 1 1.600 5M3.500 2.400L1.300 2M7 4v3.300l2.200 1.200" fill="none" stroke="#4080c4" stroke-width="1.200" stroke-linecap="round" />
              </svg>
            </button>
            <label class="model">
              <select aria-label="Model"><option>${this.model}</option></select>
              <svg width="8" height="6" viewBox="0 0 8 6"><path d="M.7 1L4 4.500 7.300 1" fill="none" stroke="#8a8880" /></svg>
            </label>
            <button class="tool send" type="submit" aria-label="Send">
              <svg width="12" height="12" viewBox="0 0 12 12"><path d="M6 11V1.500M2 5.300l4-4 4 4" fill="none" stroke="#c5b5ae" stroke-width="1.300" /></svg>
            </button>
          </div>
        </form>
        <div class="chips">
          ${suggestions.map(
            (s) => html`
              <button class="chip">
                <svg width="14" height="14" viewBox="0 0 14 14">${s.art}</svg>${s.label}
              </button>
            `
          )}
        </div>
      </main>
    `;
  }

  handleInput(event: Event) {
    this.draft = (event.target as HTMLTextAreaElement).value;
  }

  handleSubmit(event: Event) {
    event.preventDefault();
    this.draft = "";
  }
}

/* ---------- desktop ---------- */

@customElement("app-root")
export class AppRoot extends LitElement {
  static styles = css`
    :host {
      display: flex;
      flex-direction: column;
      height: 100vh;
      overflow: hidden;
      background: linear-gradient(#0b5b9e, #07539a 40%, #0a4d8c);
    }
    .stage {
      position: relative;
      display: flex;
      align-items: center;
      flex: 1;
      min-height: 0;
      padding-left: 3px;
      overflow: hidden;
    }
    background-windows {
      position: absolute;
      inset: 0;
    }
    app-dock {
      position: relative;
      height: calc(100% - 110px);
    }
    file-list {
      position: absolute;
      top: 77px;
      right: 9px;
      width: 280px;
    }
    .plus {
      position: absolute;
      top: 130px;
      right: 303px;
    }
    claude-window {
      position: absolute;
      top: 196px;
      right: 44px;
      bottom: 117px;
      width: 560px;
    }
    .cursor {
      position: absolute;
      top: 342px;
      right: 170px;
    }
  `;

  render() {
    return html`
      <menu-bar></menu-bar>
      <div class="stage">
        <background-windows aria-hidden="true"></background-windows>
        <app-dock></app-dock>
        <file-list></file-list>
        <svg class="plus" width="9" height="9" viewBox="0 0 9 9"><path d="M4.500 0v9M0 4.500h9" stroke="#8b9099" /></svg>
        <claude-window></claude-window>
        <svg class="cursor" width="30" height="54" viewBox="0 0 30 54">
          <defs>
            <linearGradient id="edge">
              <stop offset="0" stop-color="#fff" />
              <stop offset="1" stop-color="#a8a8a8" />
            </linearGradient>
          </defs>
          <path
            d="M3.500 4v37.500l6.500-6.500 5.500 13.500q2.500 2.500 5.500-1.500L16 32.500l10.500-1z"
            fill="#050505"
            stroke="url(#edge)"
            stroke-width="2.500"
            stroke-linejoin="round"
          />
        </svg>
      </div>
    `;
  }
}
